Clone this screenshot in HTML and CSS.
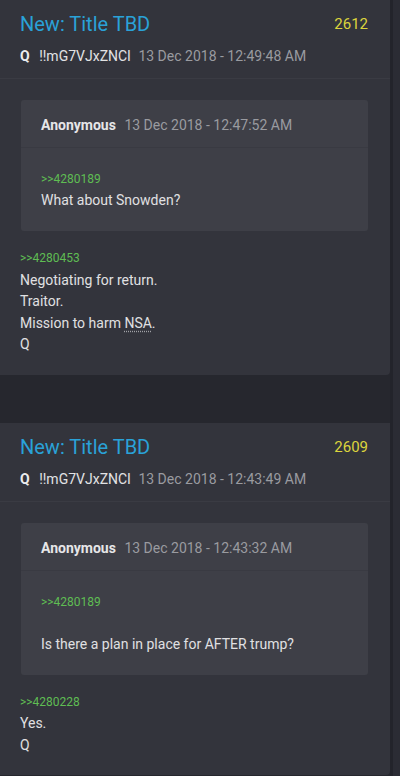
FILE: index.html
```html
<!DOCTYPE html>
<html>
<head>
  <meta charset="UTF-8">
  <title>Posts</title>
  <link rel="stylesheet" href="styles.css">
</head>
<body>
  <div class="page">
    <div class="feed">

      <div class="post">
        <div class="post-head">
          <div class="title-row">
            <span class="title">New: Title TBD</span>
            <span class="post-num">2612</span>
          </div>
          <div class="meta">
            <span class="name">Q</span>
            <span class="trip">!!mG7VJxZNCI</span>
            <span class="date">13 Dec 2018 - 12:49:48 AM</span>
          </div>
        </div>
        <div class="post-body">
          <div class="quote-box">
            <div class="quote-head">
              <span class="name">Anonymous</span>
              <span class="date">13 Dec 2018 - 12:47:52 AM</span>
            </div>
            <div class="quote-text">
              <div class="ref">&gt;&gt;4280189</div>
              <div>What about Snowden?</div>
            </div>
          </div>
          <div class="reply">
            <div class="ref">&gt;&gt;4280453</div>
            <div>Negotiating for return.</div>
            <div>Traitor.</div>
            <div>Mission to harm <span class="abbr">NSA</span>.</div>
            <div>Q</div>
          </div>
        </div>
      </div>

      <div class="post">
        <div class="post-head">
          <div class="title-row">
            <span class="title">New: Title TBD</span>
            <span class="post-num">2609</span>
          </div>
          <div class="meta">
            <span class="name">Q</span>
            <span class="trip">!!mG7VJxZNCI</span>
            <span class="date">13 Dec 2018 - 12:43:49 AM</span>
          </div>
        </div>
        <div class="post-body">
          <div class="quote-box">
            <div class="quote-head">
              <span class="name">Anonymous</span>
              <span class="date">13 Dec 2018 - 12:43:32 AM</span>
            </div>
            <div class="quote-text">
              <div class="ref">&gt;&gt;4280189</div>
              <div class="blank"></div>
              <div>Is there a plan in place for AFTER trump?</div>
            </div>
          </div>
          <div class="reply">
            <div class="ref">&gt;&gt;4280228</div>
            <div>Yes.</div>
            <div>Q</div>
          </div>
        </div>
      </div>

    </div>
    <div class="scroll-strip"></div>
  </div>
</body>
</html>
```

FILE: styles.css
```css
:root {
  --bg-page: #26272e;
  --bg-card: #33343c;
  --bg-quote: #3e3f47;
  --title-blue: #2aa2d8;
  --num-yellow: #dcd43c;
  --quote-green: #5fbd53;
  --text-main: #e0e0e2;
  --text-dim: #9a9ba0;
}

* {
  margin: 0;
  padding: 0;
  box-sizing: border-box;
}

body {
  background: var(--bg-page);
  font-family: Roboto, "Liberation Sans", sans-serif;
  color: var(--text-main);
  overflow: hidden;
}

.page {
  display: flex;
  min-height: 776px;
}

.feed {
  flex: 1;
  display: flex;
  flex-direction: column;
  gap: 48px;
}

.scroll-strip {
  width: 10px;
  background: #2b2c34;
  border-left: 3px solid #23242b;
}

.post {
  background: var(--bg-card);
  border-radius: 0 0 4px 0;
}

/* header */
.post-head {
  padding: 11px 22px 11px 20px;
  border-bottom: 1px solid #3a3b43;
}

.title-row {
  display: flex;
  justify-content: space-between;
  align-items: flex-start;
}

.title {
  font-size: 20px;
  line-height: 26px;
  color: var(--title-blue);
}

.post-num {
  font-size: 15px;
  line-height: 26px;
  color: var(--num-yellow);
}

.meta {
  margin-top: 8px;
  font-size: 14px;
  line-height: 22px;
}

.meta .name {
  font-weight: bold;
  color: #ececee;
  margin-right: 6px;
}

.trip {
  color: #e2e2e4;
  margin-right: 4px;
}

.date {
  color: var(--text-dim);
}

/* body */
.post-body {
  padding: 21px 22px 19px 20px;
}

.quote-box {
  background: var(--bg-quote);
  border-radius: 3px;
  margin-left: 1px;
}

.quote-head {
  padding: 14px 20px 0;
  height: 48px;
  font-size: 14px;
  line-height: 22px;
  border-bottom: 1px solid #393a42;
}

.quote-head .name {
  font-weight: bold;
  color: #e6e6e8;
  margin-right: 5px;
}

.quote-text {
  padding: 21px 20px 20px;
  font-size: 14px;
  line-height: 21px;
}

.blank {
  height: 21px;
}

.ref {
  font-size: 12px;
  color: var(--quote-green);
}

.reply {
  margin-top: 17px;
  font-size: 14px;
  line-height: 21.5px;
}

.abbr {
  text-decoration: underline dotted #a0a1a6;
  text-underline-offset: 3px;
}
```
